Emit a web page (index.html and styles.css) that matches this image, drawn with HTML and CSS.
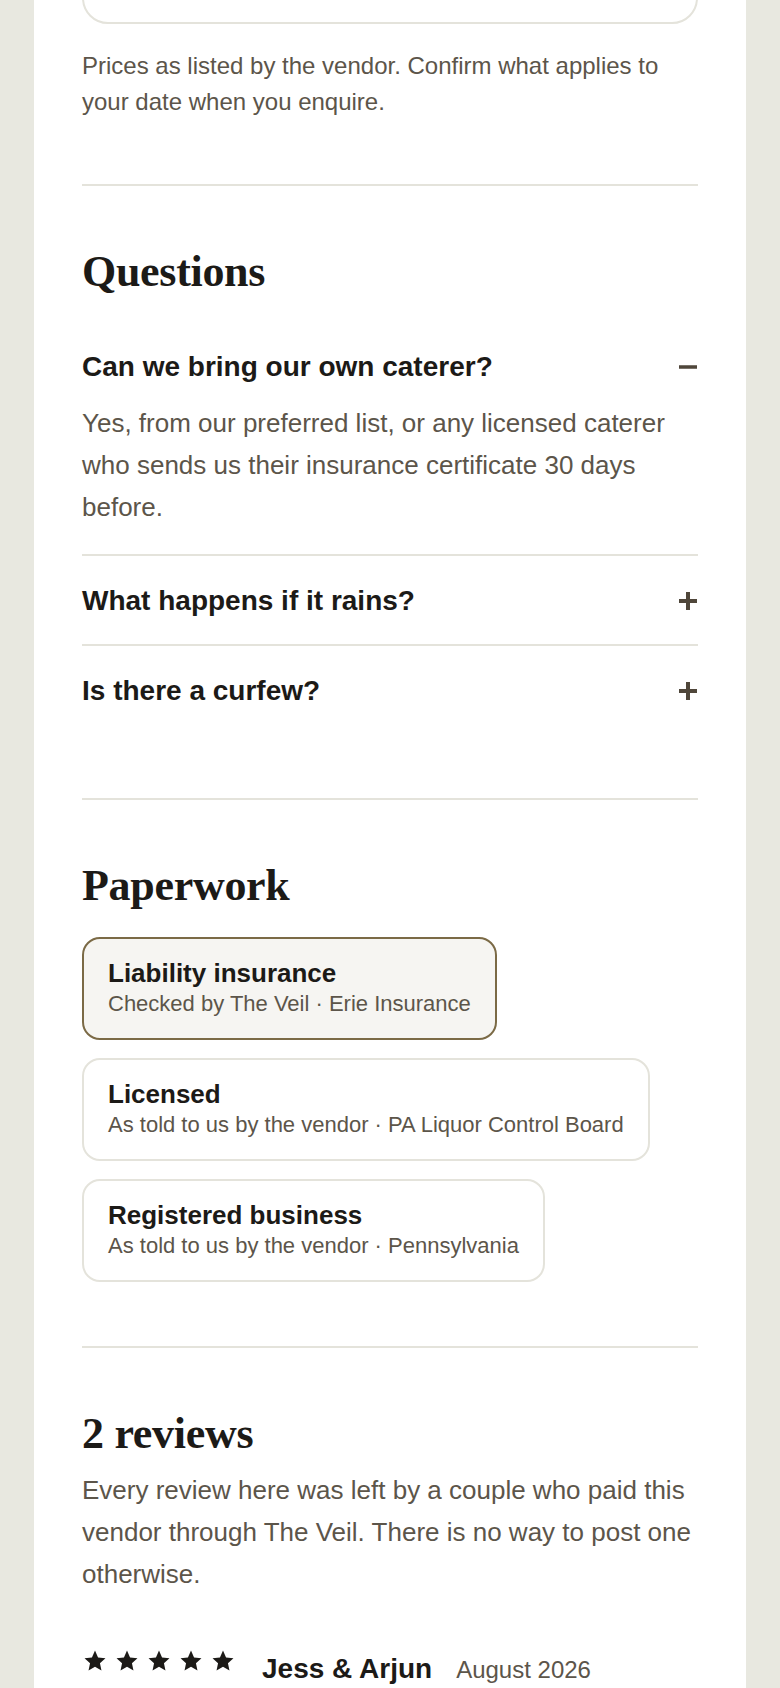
FILE: index.html
```html
<!DOCTYPE html>
<html lang="en">
<head>
<meta charset="utf-8">
<title>Vendor details</title>
<link rel="stylesheet" href="styles.css">
</head>
<body>
<main class="page">
  <div class="intro">
    <div class="price-box"></div>
    <p class="note">Prices as listed by the vendor. Confirm what applies to your date when you enquire.</p>
  </div>

  <section class="section">
    <h2 class="heading">Questions</h2>
    <div class="faq">
      <div class="faq-item open">
        <div class="faq-q">
          <span>Can we bring our own caterer?</span>
          <svg class="toggle" width="18" height="18" viewBox="0 0 18 18"><rect x="0" y="7.25" width="18" height="3.5" fill="#4f463a"/></svg>
        </div>
        <p class="faq-a">Yes, from our preferred list, or any licensed caterer who sends us their insurance certificate 30 days before.</p>
      </div>
      <div class="faq-item">
        <div class="faq-q">
          <span>What happens if it rains?</span>
          <svg class="toggle" width="18" height="18" viewBox="0 0 18 18"><rect x="0" y="7" width="18" height="4" fill="#4f463a"/><rect x="7" y="0" width="4" height="18" fill="#4f463a"/></svg>
        </div>
      </div>
      <div class="faq-item">
        <div class="faq-q">
          <span>Is there a curfew?</span>
          <svg class="toggle" width="18" height="18" viewBox="0 0 18 18"><rect x="0" y="7" width="18" height="4" fill="#4f463a"/><rect x="7" y="0" width="4" height="18" fill="#4f463a"/></svg>
        </div>
      </div>
    </div>
  </section>

  <section class="section">
    <h2 class="heading docs-heading">Paperwork</h2>
    <div class="docs">
      <div class="doc checked">
        <div class="doc-title">Liability insurance</div>
        <div class="doc-sub">Checked by The Veil · Erie Insurance</div>
      </div>
      <div class="doc">
        <div class="doc-title">Licensed</div>
        <div class="doc-sub">As told to us by the vendor · PA Liquor Control Board</div>
      </div>
      <div class="doc">
        <div class="doc-title">Registered business</div>
        <div class="doc-sub">As told to us by the vendor · Pennsylvania</div>
      </div>
    </div>
  </section>

  <section class="section reviews">
    <h2 class="heading tight">2 reviews</h2>
    <p class="reviews-intro">Every review here was left by a couple who paid this vendor through The Veil. There is no way to post one otherwise.</p>
    <div class="review-head">
      <div class="stars">
        <svg width="24" height="24" viewBox="0 0 24 24"><path d="M12 1.6L15.06 8.39L22.46 9.2L16.95 14.21L18.47 21.5L12 17.8L5.53 21.5L7.05 14.21L1.54 9.2L8.94 8.39Z" fill="#1c1a17"/></svg>
        <svg width="24" height="24" viewBox="0 0 24 24"><path d="M12 1.6L15.06 8.39L22.46 9.2L16.95 14.21L18.47 21.5L12 17.8L5.53 21.5L7.05 14.21L1.54 9.2L8.94 8.39Z" fill="#1c1a17"/></svg>
        <svg width="24" height="24" viewBox="0 0 24 24"><path d="M12 1.6L15.06 8.39L22.46 9.2L16.95 14.21L18.47 21.5L12 17.8L5.53 21.5L7.05 14.21L1.54 9.2L8.94 8.39Z" fill="#1c1a17"/></svg>
        <svg width="24" height="24" viewBox="0 0 24 24"><path d="M12 1.6L15.06 8.39L22.46 9.2L16.95 14.21L18.47 21.5L12 17.8L5.53 21.5L7.05 14.21L1.54 9.2L8.94 8.39Z" fill="#1c1a17"/></svg>
        <svg width="24" height="24" viewBox="0 0 24 24"><path d="M12 1.6L15.06 8.39L22.46 9.2L16.95 14.21L18.47 21.5L12 17.8L5.53 21.5L7.05 14.21L1.54 9.2L8.94 8.39Z" fill="#1c1a17"/></svg>
      </div>
      <span class="reviewer">Jess &amp; Arjun</span>
      <span class="review-date">August 2026</span>
    </div>
  </section>
</main>
</body>
</html>
```

FILE: styles.css
```css
* { box-sizing: border-box; }

html, body {
  margin: 0;
  padding: 0;
}

body {
  background: #e8e8e0;
  font-family: "Liberation Sans", Arial, sans-serif;
  color: #5c554a;
  overflow: hidden;
}

.page {
  margin: 0 34px;
  background: #ffffff;
  padding: 0 48px;
  min-height: 1688px;
}

.intro {
  padding-bottom: 64px;
}

.price-box {
  height: 60px;
  margin-top: -36px;
  border: 2px solid #e4e3db;
  border-radius: 26px;
}

.note {
  margin: 24px 0 0;
  font-size: 24px;
  line-height: 36px;
  color: #5c554a;
}

.section {
  border-top: 2px solid #e4e3db;
  padding: 60px 0 64px;
}

.heading {
  margin: 0 0 24px;
  font-family: "Liberation Serif", "Times New Roman", serif;
  font-weight: 700;
  font-size: 44px;
  line-height: 52px;
  color: #1c1a17;
  letter-spacing: -0.3px;
}

.heading.docs-heading {
  margin-bottom: 25px;
}

.heading.tight {
  margin-bottom: 9px;
}

.faq-item {
  padding: 25px 0 24px;
  border-bottom: 2px solid #e4e3db;
}

.faq-item:last-child {
  border-bottom: none;
}

.faq-item.open {
  padding-bottom: 26px;
}

.faq-q {
  display: flex;
  justify-content: space-between;
  align-items: center;
  font-size: 28px;
  line-height: 39px;
  font-weight: 700;
  color: #1c1a17;
}

.toggle {
  flex: none;
  display: block;
  margin-right: 1px;
}

.faq-a {
  margin: 16px 0 0;
  font-size: 26px;
  line-height: 42px;
  color: #5c554a;
}

.docs {
  display: flex;
  flex-direction: column;
  align-items: flex-start;
  gap: 18px;
}

.doc {
  border: 2px solid #e4e3db;
  border-radius: 18px;
  background: #ffffff;
  padding: 18px 24px 19px;
}

.doc.checked {
  border-color: #7b6a46;
  background: #f6f5f2;
}

.doc-title {
  font-size: 26px;
  line-height: 32px;
  font-weight: 700;
  color: #1c1a17;
}

.doc-sub {
  font-size: 22px;
  line-height: 30px;
  color: #5c554a;
}

.reviews-intro {
  margin: 0;
  font-size: 26px;
  line-height: 42px;
  color: #5c554a;
}

.review-head {
  display: flex;
  align-items: baseline;
  margin-top: 54px;
}

.stars {
  display: flex;
  gap: 8px;
  align-self: flex-start;
  margin-top: 0;
  margin-left: 1px;
}

.stars svg {
  display: block;
}

.reviewer {
  margin-left: 27px;
  font-size: 28px;
  line-height: 39px;
  font-weight: 700;
  color: #1c1a17;
}

.review-date {
  margin-left: 24px;
  font-size: 24px;
  line-height: 39px;
  color: #5c554a;
}
```
